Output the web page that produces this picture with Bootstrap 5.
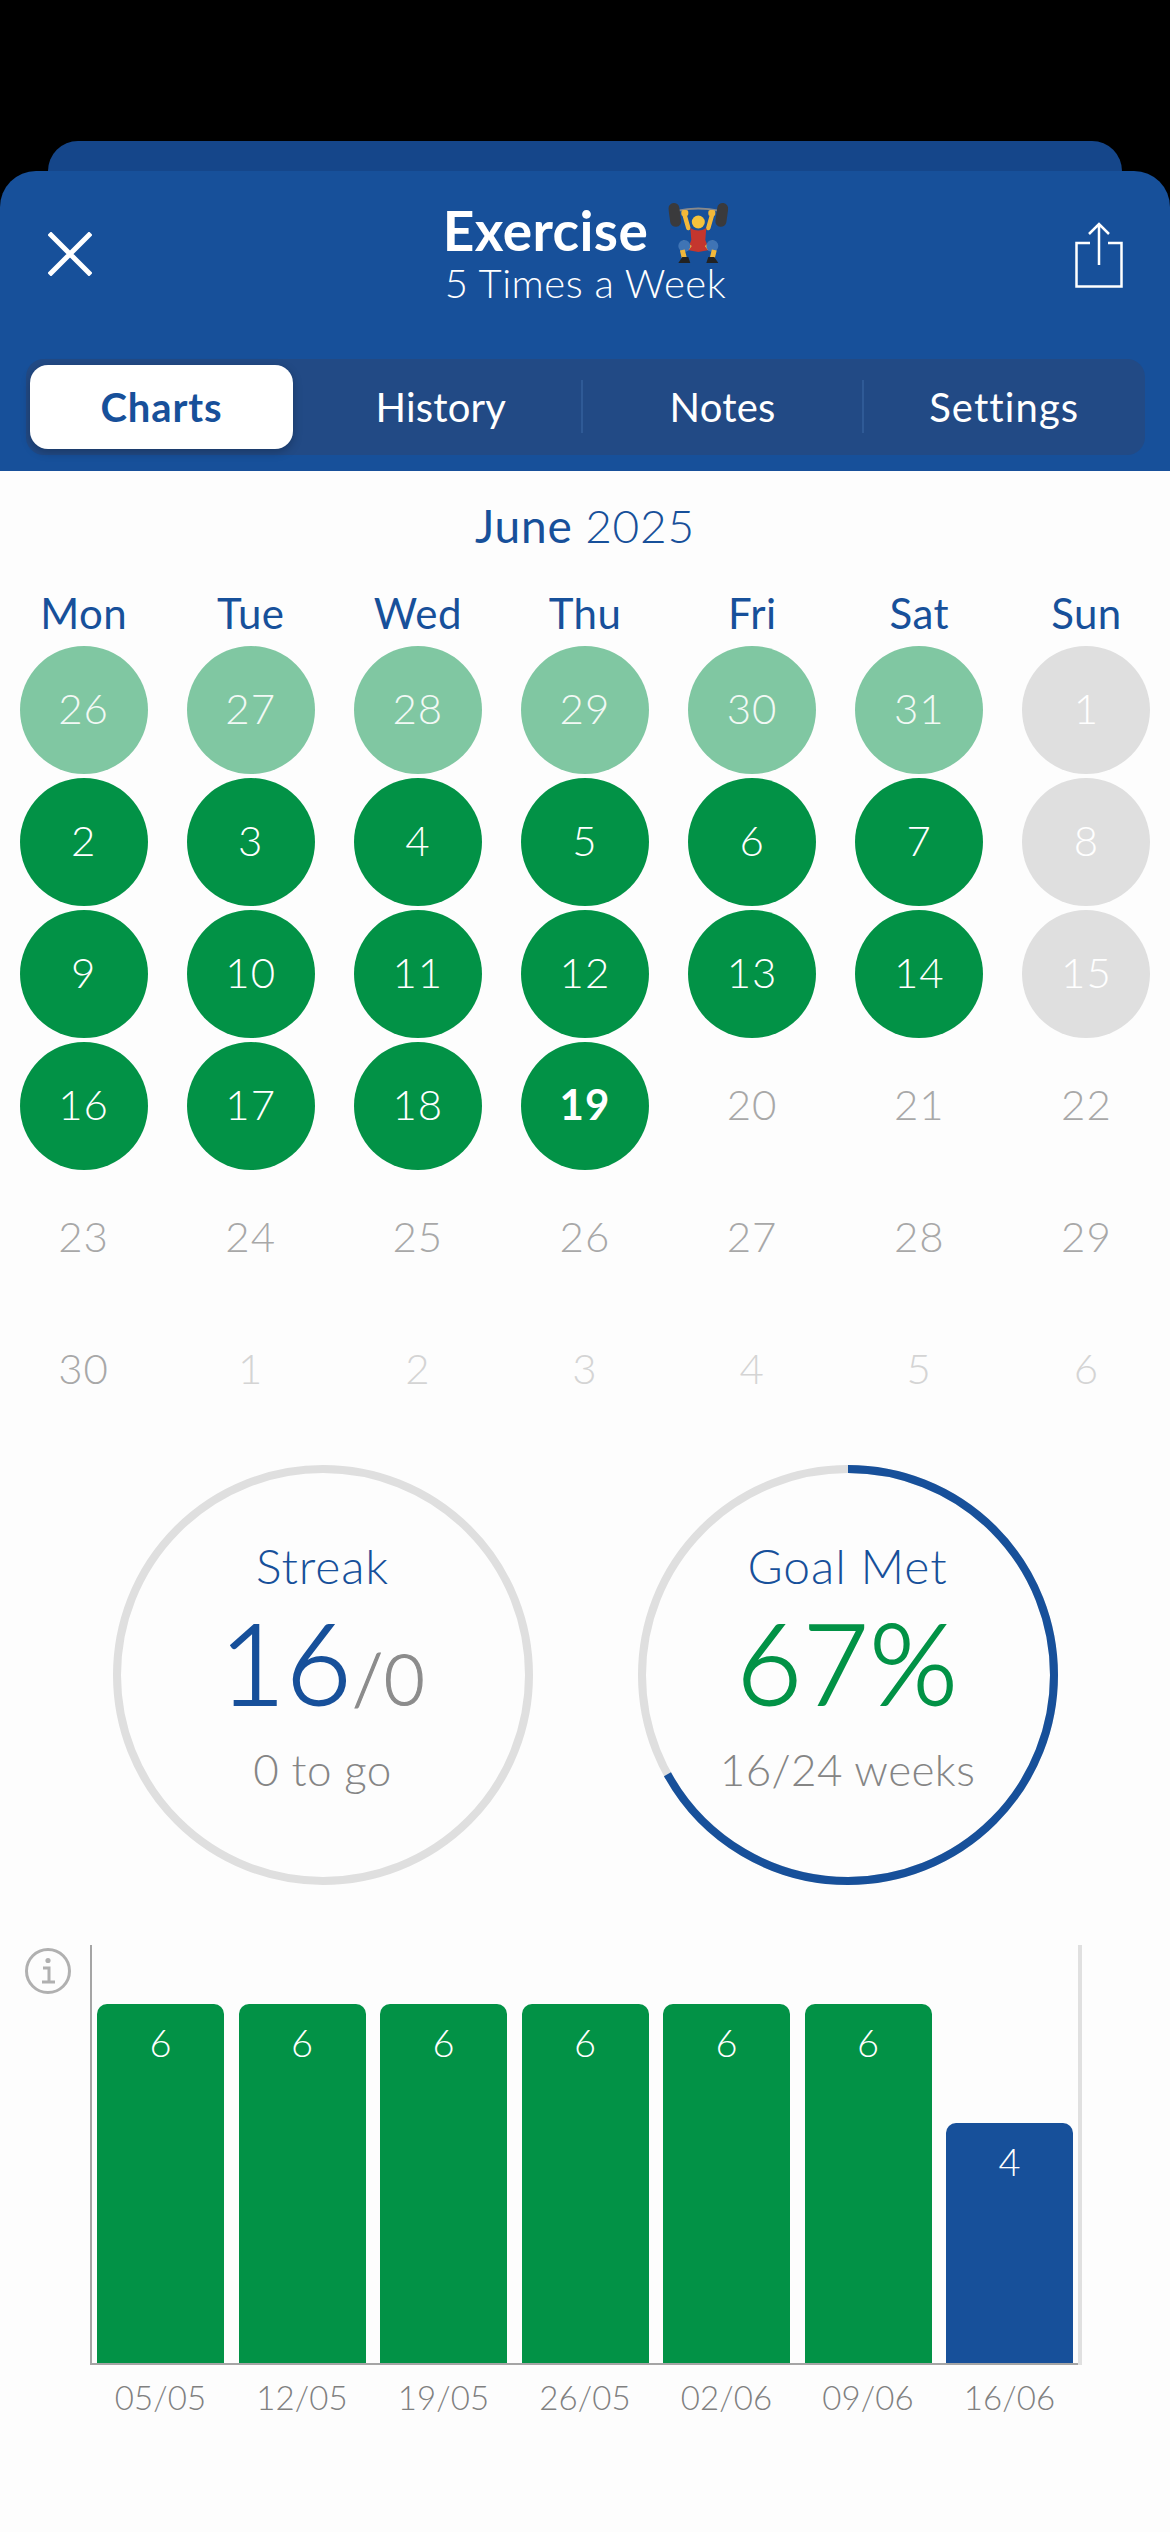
<!DOCTYPE html>
<html lang="en">
<head>
<meta charset="utf-8">
<title>Exercise</title>
<link href="https://cdn.jsdelivr.net/npm/bootstrap@5.3.0/dist/css/bootstrap.min.css" rel="stylesheet">
<style>
html,body{background:#000;margin:0;}
body{font-family:Lato,"Noto Sans",sans-serif;width:1170px;}
.stage{padding-top:141px;height:2532px;display:flex;flex-direction:column;}
.back-sheet{height:60px;margin:0 48px -30px;background:#15468a;border-radius:30px 30px 0 0;}
.front-sheet{position:relative;height:300px;background:#17509a;border-radius:36px 36px 0 0;color:#fff;padding:0 25px 16px 26px;}
.top-row{height:188px;}
.close-ico{margin:61px 0 0 22px;}
.share-ico{position:absolute;left:1049px;top:51px;}
.title-wrap{padding-top:31px;}
.title-main{height:57px;font-size:55px;font-weight:700;line-height:57px;letter-spacing:.4px;}
.lift-ico{margin:5px 0 0 20px;}
.title-sub{font-size:40px;font-weight:300;line-height:44px;letter-spacing:.5px;padding-top:2px;}
.seg{height:96px;background:#224a85;border-radius:18px;padding:6px 0 6px 4px;}
.seg-item{flex:1 1 0;height:84px;font-size:40px;line-height:84px;text-align:center;color:#fff;position:relative;letter-spacing:.2px;}
.seg-item.active{flex:0 0 263px;margin-right:7px;background:#fff;color:#17509a;font-weight:700;letter-spacing:.9px;border-radius:18px;box-shadow:0 3px 10px rgba(0,0,0,.25);}
.seg-item.spaced{letter-spacing:1.1px;}
.seg-item.divided::before{content:"";position:absolute;left:-1px;top:15px;height:53px;width:2px;background:#2f5a96;}
.sheet-body{flex:1;background:#fdfdfd;}
.month{font-size:46px;line-height:54px;text-align:center;color:#17509a;padding-top:28px;font-weight:400;letter-spacing:.8px;}
.month span{font-weight:300;}
.cal-grid{display:grid;grid-template-columns:repeat(7,1fr);}
.dow{font-size:42px;line-height:50px;text-align:center;color:#17509a;height:93px;padding-top:35px;letter-spacing:.4px;}
.cell{height:132px;display:flex;justify-content:center;}
.dot{width:128px;height:128px;border-radius:50%;font-size:42px;font-weight:300;line-height:124px;text-align:center;letter-spacing:1px;}
.done{background:#029246;color:#fff;}
.pale{background:#80c7a2;color:#f2f9f5;}
.off{background:#dfdfdf;color:#fff;}
.fut{color:#a8a8a8;}
.far{color:#d4d4d4;}
.today{font-weight:700;}
.rings{display:flex;justify-content:center;gap:105px;margin-top:27px;}
.ring{position:relative;width:420px;height:420px;display:flex;flex-direction:column;align-items:center;padding-top:73px;}
.ring svg{position:absolute;inset:0;}
.ring-label{font-size:48px;font-weight:300;line-height:56px;color:#17509a;letter-spacing:.9px;}
.ring-num{font-size:113px;font-weight:300;line-height:118px;margin-top:8px;-webkit-text-stroke:1.8px currentColor;letter-spacing:1px;}
.ring-num small{font-size:70px;line-height:1;color:#8c8c8c;font-weight:300;-webkit-text-stroke:1.2px #8c8c8c;}
.ring-sub{font-size:44px;font-weight:300;line-height:54px;color:#858585;margin-top:22px;letter-spacing:.4px;}
.c-blue{color:#17509a;}
.c-green{color:#029246;}
.chart-row{display:flex;margin-top:60px;}
.info-col{width:90px;padding:3px 0 0 25px;flex:none;}
.plot{width:991px;height:420px;border-left:2px solid #a5a5a5;border-bottom:2px solid #a5a5a5;position:relative;display:flex;align-items:flex-end;gap:14.5px;padding-left:5px;}
.plot::after{content:"";position:absolute;right:-1px;top:0;bottom:-2px;width:4px;background:#e0e0e0;}
.bar{width:127px;border-radius:10px 10px 0 0;color:#fff;font-size:38px;font-weight:300;text-align:center;padding-top:16px;line-height:44px;}
.bar-cur{background:#17509a;}
.xlabels{display:flex;gap:14.5px;margin-left:97px;padding-top:10px;}
.xlabels div{width:127px;text-align:center;font-size:33px;line-height:44px;font-weight:300;color:#808080;letter-spacing:.1px;white-space:nowrap;}
</style>
</head>
<body>
<div class="stage">
  <div class="back-sheet"></div>
  <div class="front-sheet">
    <div class="top-row d-flex justify-content-between align-items-start position-relative">
      <svg class="close-ico" width="44" height="44" viewBox="0 0 44 44" fill="none" stroke="#fff" stroke-width="5" stroke-linecap="square"><path d="M3 3L41 41M41 3L3 41"/></svg>
      <div class="title-wrap text-center position-absolute top-0 start-50 translate-middle-x text-nowrap">
        <div class="title-main d-flex align-items-center justify-content-center">Exercise
          <svg class="lift-ico" width="60" height="62" viewBox="0 0 60 62">
            <path d="M8 9Q30 4 52 9" fill="none" stroke="#8a8a8a" stroke-width="2"/>
            <rect x="1" y="1" width="11" height="24" rx="5.5" transform="rotate(-8 6 13)" fill="#3a3a3c"/>
            <rect x="48" y="1" width="11" height="24" rx="5.5" transform="rotate(8 54 13)" fill="#3a3a3c"/>
            <path d="M16 12L20 26M44 12L40 26" stroke="#f3b83a" stroke-width="4.5" stroke-linecap="round"/>
            <rect x="13" y="8" width="7" height="6" rx="2" fill="#f3b83a"/><rect x="40" y="8" width="7" height="6" rx="2" fill="#f3b83a"/>
            <circle cx="30" cy="20" r="6.5" fill="#f5c23c"/>
            <path d="M22 26Q30 31 38 26L37 38 41 48 30 50 19 48 23 38Z" fill="#c4362e"/>
            <path d="M22 46L14 40M38 46L46 40" stroke="#f3b83a" stroke-width="5"/>
            <circle cx="16" cy="44" r="6" fill="#3f74b5"/><circle cx="44" cy="44" r="6" fill="#3f74b5"/>
            <path d="M14 48L16 56M46 48L44 56" stroke="#f3b83a" stroke-width="5"/>
            <path d="M10 61L14 55H20L22 61ZM50 61L46 55H40L38 61Z" fill="#222"/>
          </svg>
        </div>
        <div class="title-sub">5 Times a Week</div>
      </div>
      <svg class="share-ico" width="48" height="66" viewBox="0 0 48 66" fill="none" stroke="#fff" stroke-width="2.5"><path d="M15 21H1.5V64.5H46.5V21H33"/><path d="M24 43V2M14 12L24 2L34 12"/></svg>
    </div>
    <div class="seg d-flex">
      <div class="seg-item active">Charts</div>
      <div class="seg-item">History</div>
      <div class="seg-item divided">Notes</div>
      <div class="seg-item divided spaced">Settings</div>
    </div>
  </div>
  <div class="sheet-body">
    <div class="month">June <span>2025</span></div>
    <div class="cal-grid">
      <div class="dow">Mon</div><div class="dow">Tue</div><div class="dow">Wed</div><div class="dow">Thu</div><div class="dow">Fri</div><div class="dow">Sat</div><div class="dow">Sun</div>
      <div class="cell"><div class="dot pale">26</div></div><div class="cell"><div class="dot pale">27</div></div><div class="cell"><div class="dot pale">28</div></div><div class="cell"><div class="dot pale">29</div></div><div class="cell"><div class="dot pale">30</div></div><div class="cell"><div class="dot pale">31</div></div><div class="cell"><div class="dot off">1</div></div>
      <div class="cell"><div class="dot done">2</div></div><div class="cell"><div class="dot done">3</div></div><div class="cell"><div class="dot done">4</div></div><div class="cell"><div class="dot done">5</div></div><div class="cell"><div class="dot done">6</div></div><div class="cell"><div class="dot done">7</div></div><div class="cell"><div class="dot off">8</div></div>
      <div class="cell"><div class="dot done">9</div></div><div class="cell"><div class="dot done">10</div></div><div class="cell"><div class="dot done">11</div></div><div class="cell"><div class="dot done">12</div></div><div class="cell"><div class="dot done">13</div></div><div class="cell"><div class="dot done">14</div></div><div class="cell"><div class="dot off">15</div></div>
      <div class="cell"><div class="dot done">16</div></div><div class="cell"><div class="dot done">17</div></div><div class="cell"><div class="dot done">18</div></div><div class="cell"><div class="dot done today">19</div></div><div class="cell"><div class="dot fut">20</div></div><div class="cell"><div class="dot fut">21</div></div><div class="cell"><div class="dot fut">22</div></div>
      <div class="cell"><div class="dot fut">23</div></div><div class="cell"><div class="dot fut">24</div></div><div class="cell"><div class="dot fut">25</div></div><div class="cell"><div class="dot fut">26</div></div><div class="cell"><div class="dot fut">27</div></div><div class="cell"><div class="dot fut">28</div></div><div class="cell"><div class="dot fut">29</div></div>
      <div class="cell"><div class="dot fut">30</div></div><div class="cell"><div class="dot far">1</div></div><div class="cell"><div class="dot far">2</div></div><div class="cell"><div class="dot far">3</div></div><div class="cell"><div class="dot far">4</div></div><div class="cell"><div class="dot far">5</div></div><div class="cell"><div class="dot far">6</div></div>
    </div>
    <div class="rings">
      <div class="ring">
        <svg width="420" height="420" viewBox="0 0 420 420"><circle cx="210" cy="210" r="206" fill="none" stroke="#dfdfdf" stroke-width="8"/></svg>
        <div class="ring-label">Streak</div>
        <div class="ring-num c-blue">16<small>/0</small></div>
        <div class="ring-sub">0 to go</div>
      </div>
      <div class="ring">
        <svg width="420" height="420" viewBox="0 0 420 420"><circle cx="210" cy="210" r="206" fill="none" stroke="#dfdfdf" stroke-width="8"/><circle cx="210" cy="210" r="206" fill="none" stroke="#17509a" stroke-width="8" pathLength="100" stroke-dasharray="67 100" transform="rotate(-90 210 210)"/></svg>
        <div class="ring-label">Goal Met</div>
        <div class="ring-num c-green">67%</div>
        <div class="ring-sub">16/24 weeks</div>
      </div>
    </div>
    <div class="chart-row">
      <div class="info-col">
        <svg width="46" height="46" viewBox="0 0 46 46" fill="none" stroke="#b0b0b0"><circle cx="23" cy="23" r="21.5" stroke-width="3"/><circle cx="23" cy="12.5" r="2.6" fill="#b0b0b0" stroke="none"/><path d="M18 20H24V33M17 34H30" stroke-width="3"/></svg>
      </div>
      <div class="plot">
        <div class="bar done" style="height:359px">6</div>
        <div class="bar done" style="height:359px">6</div>
        <div class="bar done" style="height:359px">6</div>
        <div class="bar done" style="height:359px">6</div>
        <div class="bar done" style="height:359px">6</div>
        <div class="bar done" style="height:359px">6</div>
        <div class="bar bar-cur" style="height:240px">4</div>
      </div>
    </div>
    <div class="xlabels"><div>05/05</div><div>12/05</div><div>19/05</div><div>26/05</div><div>02/06</div><div>09/06</div><div>16/06</div></div>
  </div>
</div>
<script src="https://cdn.jsdelivr.net/npm/bootstrap@5.3.0/dist/js/bootstrap.bundle.min.js"></script>
</body>
</html>
